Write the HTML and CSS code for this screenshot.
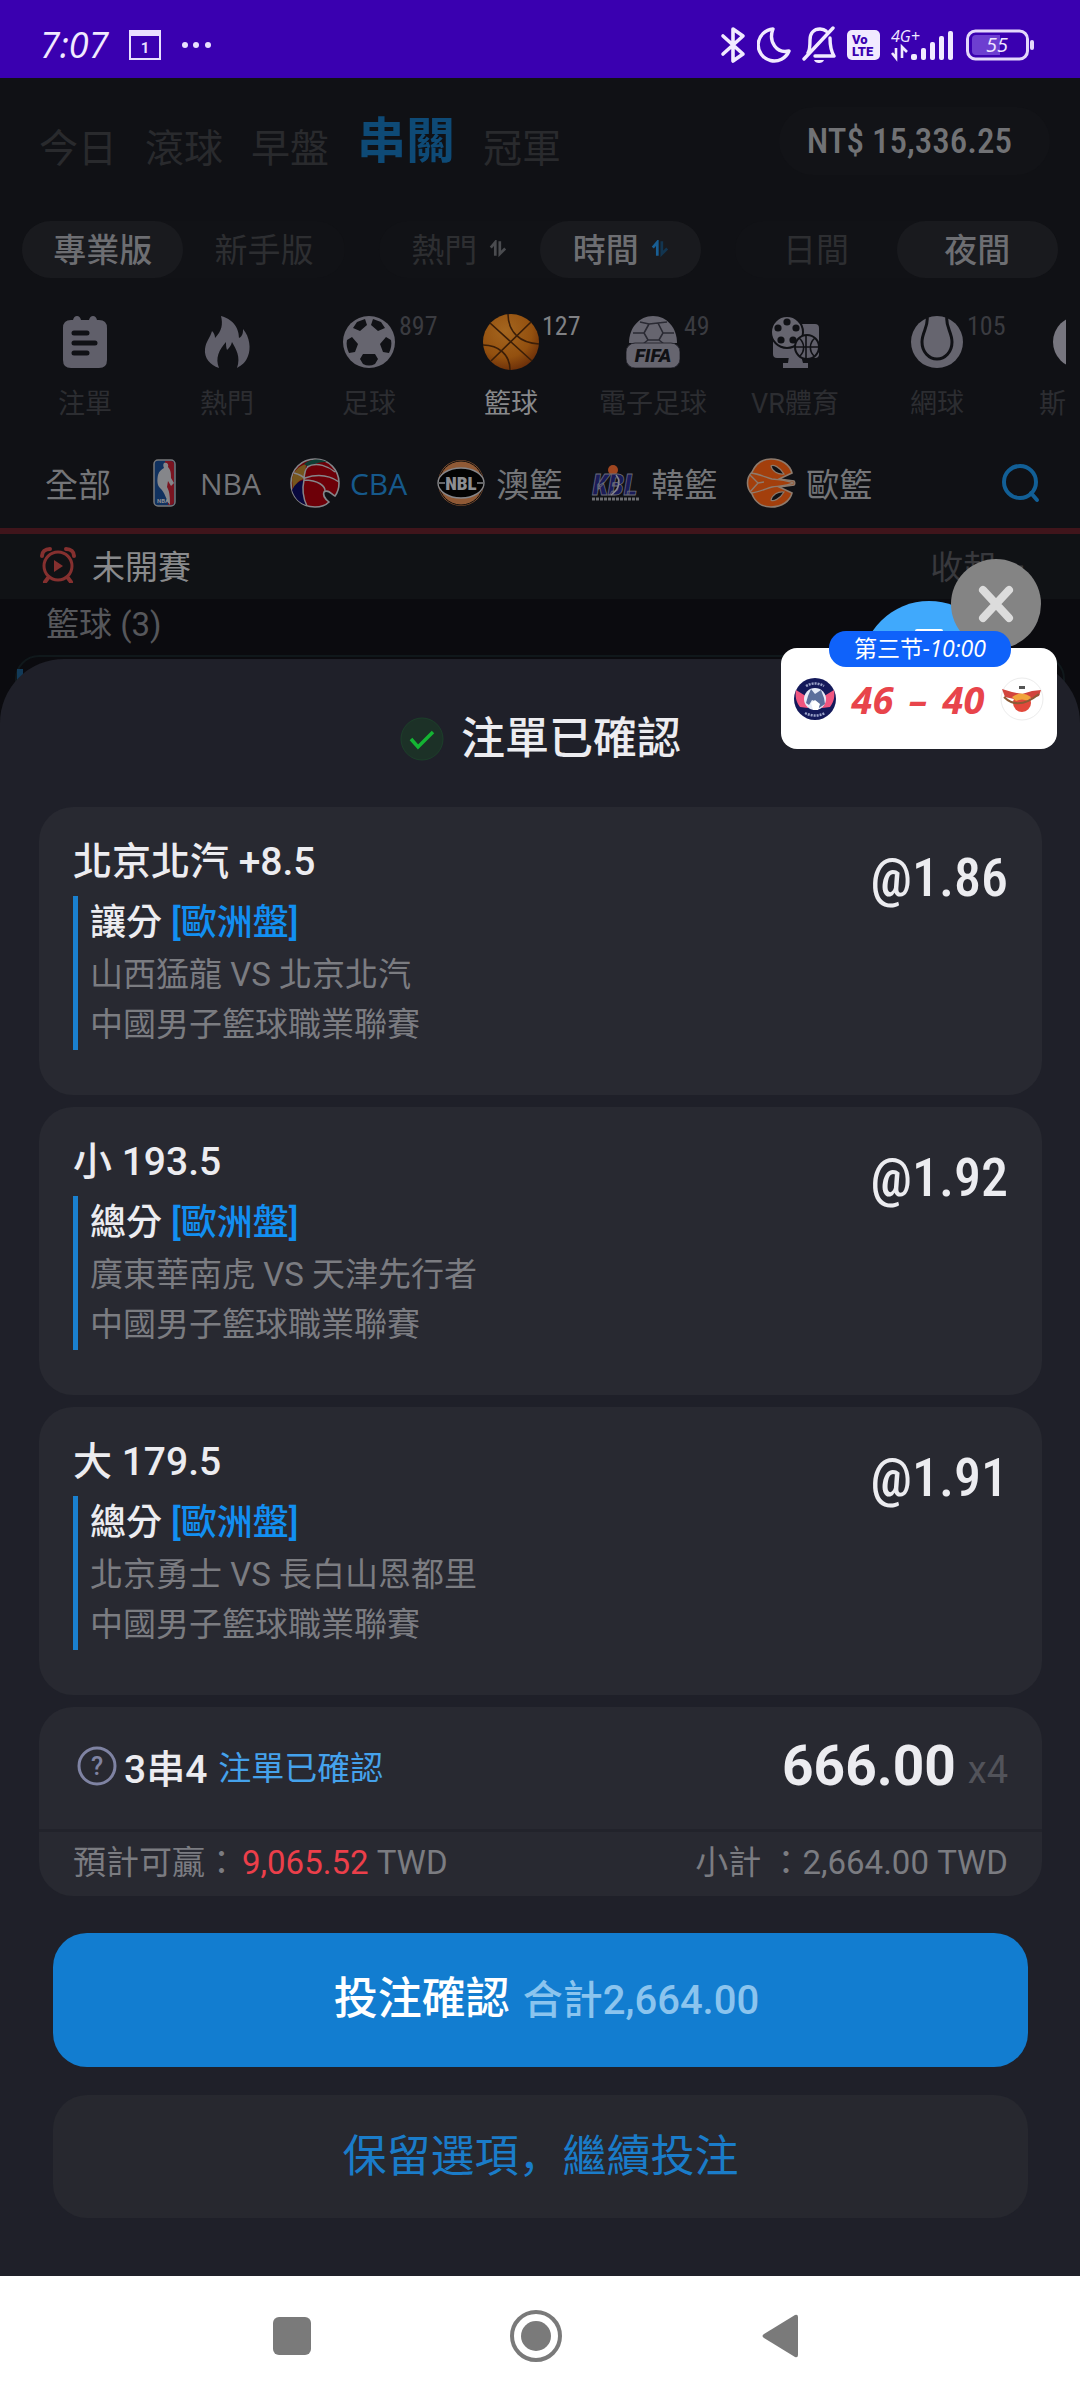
FILE: index.html
```html
<!DOCTYPE html>
<html lang="zh-Hant">
<head>
<meta charset="utf-8">
<meta name="viewport" content="width=device-width, initial-scale=1">
<title>注單已確認</title>
<link rel="stylesheet" href="styles.css">
</head>
<body>
<div class="screen">
  <div class="status">
    <div class="status-left">
      <span class="clock">7:07</span>
      <svg width="32" height="30" viewBox="0 0 32 30"><rect x="1" y="1" width="30" height="28" fill="none" stroke="#e9dfff" stroke-width="2"/><path d="M0 0h32v6H0z" fill="#e9dfff"/><text x="16" y="23" text-anchor="middle" font-family="Roboto" font-weight="700" font-size="15" fill="#e9dfff">1</text></svg>
      <svg width="30" height="8" viewBox="0 0 30 8" fill="#e9dfff"><circle cx="4" cy="4" r="3"/><circle cx="15" cy="4" r="3"/><circle cx="27" cy="4" r="3"/></svg>
    </div>
    <div class="status-right">
      <svg width="26" height="38" viewBox="0 0 26 38" fill="none" stroke="#f1eaff" stroke-width="3.6" stroke-linejoin="round" stroke-linecap="round"><path d="M3 10l20 18-10 7V3l10 7L3 28"/></svg>
      <svg width="34" height="36" viewBox="0 0 34 36" fill="none" stroke="#f1eaff" stroke-width="3.4" stroke-linejoin="round"><path d="M16 2A16 16 0 1 0 32 24C20 27 11 15 16 2z"/></svg>
      <svg width="34" height="38" viewBox="0 0 34 38" fill="none" stroke="#f1eaff" stroke-width="3.4" stroke-linejoin="round" stroke-linecap="round"><path d="M6 27C8 24 8 21 8 14c0-7 4-11 10-11 3 0 5 1 6 2M28 12c0 9 1 13 4 18H13M31 2L2 33"/><path d="M12 34h10c-1 4-9 4-10 0z" fill="#f1eaff" stroke="none"/></svg>
      <svg width="33" height="30" viewBox="0 0 33 30"><rect width="33" height="30" rx="5" fill="#f1eaff"/><g font-family="Roboto" font-weight="900" fill="#3a00b0"><text x="5" y="14" font-size="13">Vo</text><text x="5" y="26" font-size="13">LTE</text></g></svg>
      <svg width="64" height="42" viewBox="0 0 64 42" fill="#f1eaff"><text x="0" y="18" font-family="Open Sans" font-style="italic" font-size="16">4G+</text><path d="M5 24v10l-4-5m10 5V23l5 5" fill="none" stroke="#f1eaff" stroke-width="2.6"/><rect x="20" y="30" width="6" height="6" rx="2"/><rect x="30" y="24" width="5" height="12" rx="2"/><rect x="39" y="18" width="5" height="18" rx="2"/><rect x="48" y="12" width="5" height="24" rx="2"/><rect x="57" y="7" width="5" height="29" rx="2"/></svg>
      <svg width="68" height="32" viewBox="0 0 68 32"><rect x="1.5" y="2" width="60" height="28" rx="8" fill="none" stroke="#e4d8fb" stroke-width="3"/><path d="M10 6h24v20H10q-4 0-4-4V10q0-4 4-4z" fill="#6d3fd0"/><rect x="64" y="11" width="4" height="10" rx="2" fill="#e4d8fb"/><text x="31" y="23" text-anchor="middle" font-family="Open Sans" font-style="italic" font-size="20" fill="#efe6ff">55</text></svg>
    </div>
  </div>

  <header class="top">
    <nav class="tabs">
      <a href="#">今日</a><a href="#">滾球</a><a href="#">早盤</a><a href="#" class="on">串關</a><a href="#">冠軍</a>
    </nav>
    <button class="balance">NT$ 15,336.25</button>
  </header>

  <div class="toggles">
    <div class="group"><button class="on">專業版</button><button>新手版</button></div>
    <div class="group"><button>熱門 <svg width="18" height="17" viewBox="0 0 20 18" fill="none" stroke="#4a4b4f" stroke-width="3"><path d="M2 8l5-6v15M12 1v14l6-6"/></svg></button><button class="on">時間 <svg width="18" height="17" viewBox="0 0 20 18" fill="none" stroke="#185e94" stroke-width="3"><path d="M2 8l5-6v15"/><path d="M12 1v14l6-6" stroke="#123550"/></svg></button></div>
    <div class="group"><button>日間</button><button class="on">夜間</button></div>
  </div>

  <nav class="sports">
    <a href="#"><span class="ico"><svg width="52" height="52" viewBox="0 0 52 52"><path d="M4 12q0-8 8-8h2q1-4 4-4t4 4h8q1-4 4-4t4 4h2q8 0 8 8v32q0 8-8 8H12q-8 0-8-8z" fill="#605f6a"/><path d="M15 17h13M15 27h21M15 37h13" stroke="#101115" stroke-width="5" stroke-linecap="round"/></svg></span>注單</a>
    <a href="#"><span class="ico"><svg width="52" height="52" viewBox="0 0 52 52"><path d="M20 0C34 4 38 14 38 22c4-2 4-6 4-9 7 8 8 20 5 27-2 6-6 9-11 12 4-11-1-19-5-26-1 4-3 6-5 8-1-3-1-5-1-8-7 8-11 16-7 26C9 49 3 42 4 33c1-8 5-11 7-18 2 2 3 4 3 7 7-7 8-14 6-22z" fill="#605f6a"/></svg></span>熱門</a>
    <a href="#"><span class="ico"><svg width="52" height="52" viewBox="0 0 52 52"><circle cx="26" cy="26" r="26" fill="#66656f"/><g fill="#101115"><path d="M14 6l8-3 2 6-7 6-7-3zM38 6l-8-3-2 6 7 6 7-3zM4 24l5-3 6 7-3 8-6 1c-2-4-3-9-2-13zM48 24l-5-3-6 7 3 8 6 1c2-4 3-9 2-13zM20 38h12l3 5-3 5c-4 2-8 2-12 0l-3-5z"/></g></svg><em>897</em></span>足球</a>
    <a href="#" class="on"><span class="ico"><svg class="big" width="58" height="58" viewBox="0 0 58 58"><defs><radialGradient id="ball" cx=".4" cy=".3" r=".8"><stop offset="0" stop-color="#a5661f"/><stop offset=".6" stop-color="#93500f"/><stop offset="1" stop-color="#5f2508"/></radialGradient></defs><circle cx="29" cy="29" r="28" fill="url(#ball)"/><path d="M8 10l42 38M49 9L9 48M26 1c0 18 12 29 31 30M1 32c16 0 27 10 27 25" fill="none" stroke="#3b1e08" stroke-width="1.6"/></svg><em>127</em></span>籃球</a>
    <a href="#"><span class="ico"><svg width="54" height="52" viewBox="0 0 54 52"><path d="M3 27C3 12 13 0 27 0s24 12 24 27z" fill="#66656f"/><path d="M14 6l9 2 9-1 9-1M23 8l-5 9 4 7h11l4-7-5-10M18 17H7M37 17h11M22 24l-5 4M33 24l5 4" fill="none" stroke="#2a2a33" stroke-width="1.6"/><rect x="0" y="27" width="54" height="25" rx="9" fill="#66656f" stroke="#2a2a33" stroke-width="1"/><text x="27" y="46" text-anchor="middle" font-family="Roboto" font-style="italic" font-weight="900" font-size="19" fill="#101115">FIFA</text></svg><em>49</em></span>電子足球</a>
    <a href="#"><span class="ico"><svg width="52" height="52" viewBox="0 0 52 52"><path d="M4 12q0-4 4-4h38q4 0 4 4v26q0 4-4 4H8q-4 0-4-4zM20 40h12l2 7h5v5H14v-5h5z" fill="#605f6a"/><circle cx="18" cy="16" r="16" fill="#66656f" stroke="#101115" stroke-width="2"/><g fill="#101115"><circle cx="18" cy="6" r="3.6"/><circle cx="9" cy="12" r="3.6"/><circle cx="27" cy="12" r="3.6"/><circle cx="12" cy="24" r="3.6"/><circle cx="24" cy="24" r="3.6"/></g><circle cx="38" cy="31" r="12" fill="#605f6a" stroke="#101115" stroke-width="2"/><path d="M27 31h22M37 19v24M30 22c6 5 6 13 1 18M46 22c-6 5-6 13-1 18" fill="none" stroke="#101115" stroke-width="1.6"/></svg></span>VR體育</a>
    <a href="#"><span class="ico"><svg width="52" height="52" viewBox="0 0 52 52"><circle cx="26" cy="26" r="26" fill="#66656f"/><path d="M16 0c2 10-5 16-5 26 0 10 7 17 15 17s15-7 15-17c0-10-7-16-5-26" fill="none" stroke="#101115" stroke-width="3"/></svg><em>105</em></span>網球</a>
    <a href="#" class="peek"><span class="ico"><svg width="52" height="52" viewBox="0 0 52 52"><circle cx="26" cy="26" r="26" fill="#77767f"/></svg></span><span>斯</span></a>
  </nav>

  <div class="leagues">
    <a href="#">全部</a>
    <a href="#"><svg width="50" height="50" viewBox="0 0 50 50"><rect x="14" y="2" width="21" height="46" rx="4" fill="#10315f" stroke="#77787a" stroke-width="1.5"/><path d="M25 3h6q3 0 3 3v38q0 3-3 3h-3z" fill="#7a1420"/><path d="M24 5c3-1 5 1 4 4 3 3 3 7 3 11l3 5-3 3-3-5-1 6c3 5 3 12 3 18-4-5-5-13-10-17-3-3-3-8-2-13 1-4 4-6 6-7-1-2-1-4 0-5z" fill="#85868a"/><text x="23" y="45" text-anchor="middle" font-family="Roboto" font-weight="700" font-size="6" fill="#8d8e91">NBA</text></svg><span class="abbr">NBA</span></a>
    <a href="#" class="on"><svg width="50" height="50" viewBox="0 0 50 50"><path d="M25 1C12 1 1 11 1 25s10 24 24 24c6 0 11-2 14-5-5-4-6-8-5-10 4-3 7 2 11 4 3-4 4-9 4-13C49 12 39 1 25 1z" fill="#6d0008" stroke="#85868a" stroke-width="1.6"/><path d="M2 21C4 12 9 8 16 6l-1 15C9 21 6 26 3 32z" fill="#75551c"/><path d="M2 32c3-6 7-9 12-10-2 9-1 18 2 25C9 45 4 39 2 32z" fill="#08083d"/><path d="M14 6c8-6 17-5 23-2-7 0-12 1-18 5z" fill="#0d3d33"/><path d="M14 22c0-8 2-12 5-14M14 22c-2 9-1 18 3 26M14 22c14 0 22 6 21 12M15 20c12-4 24-3 34 4M17 9c10-6 22 0 28 5M4 15c4 1 8 2 11 6" fill="none" stroke="#85868a" stroke-width="1.5"/></svg><span class="abbr">CBA</span></a>
    <a href="#"><svg width="50" height="50" viewBox="0 0 50 50"><circle cx="25" cy="25" r="23" fill="#8f5935"/><circle cx="25" cy="25" r="22" fill="none" stroke="#0a0a0a" stroke-width="1"/><ellipse cx="25" cy="25" rx="23" ry="15" fill="#030303" stroke="#85868a" stroke-width="1.4"/><path d="M3 25h6M41 25h6" stroke="#85868a" stroke-width="1.5"/><text x="25" y="32" text-anchor="middle" font-family="Roboto Condensed" font-weight="900" font-size="19" fill="#8d8e91">NBL</text></svg>澳籃</a>
    <a href="#"><svg width="50" height="50" viewBox="0 0 50 50"><circle cx="22" cy="12" r="5" fill="#a04620"/><text x="24" y="37" text-anchor="middle" font-family="Roboto Condensed" font-style="italic" font-weight="900" font-size="29" fill="#1a1b58" stroke="#6a6b78" stroke-width=".8">KBL</text><path d="M25 17c6 7 2 15-5 20" fill="none" stroke="#85868a" stroke-width="1.5"/><path d="M1 41h48" stroke="#6b6c70" stroke-width="3" stroke-dasharray="3 1"/></svg>韓籃</a>
    <a href="#"><svg width="50" height="50" viewBox="0 0 50 50"><path d="M6 14C10 5 17 1 25 1c11 0 19 6 21 14l-13 6 15 2c1 1 1 3 0 4l-15 2 13 6C44 43 36 49 25 49 16 49 9 44 6 36 0 30 0 20 6 14z" fill="#a33f0c" stroke="#8d7a6c" stroke-width="1.6"/><path d="M5 15c9 1 16 5 21 6 7 1 15 1 21 4-6 3-14 3-21 4-5 1-12 5-21 6M4 17l8 8-8 9M12 25l6-1" fill="none" stroke="#8d7a6c" stroke-width="1.4"/><path d="M25 8c2-2 9 1 13 8-6 1-12-3-13-8zM25 42c2 2 9-1 13-8-6-1-12 3-13 8z" fill="#101115" stroke="#8d7a6c" stroke-width="1.2"/></svg>歐籃</a>
    <button class="search" aria-label="搜尋"><svg width="38" height="40" viewBox="0 0 38 40" fill="none" stroke="#125f96" stroke-width="4" stroke-linecap="round"><circle cx="18" cy="19" r="16"/><path d="M29 30l6 7"/></svg></button>
  </div>

  <div class="section-head">
    <svg width="36" height="36" viewBox="0 0 36 36" fill="none" stroke="#85302f" stroke-width="3"><circle cx="18" cy="19" r="14"/><path d="M14 13l9 6-9 6z" fill="#85302f" stroke="none"/><path d="M2 9c0-4 3-7 8-7M34 9c0-4-3-7-8-7M8 31l-3 4M28 31l3 4" stroke-linecap="round" stroke-width="4"/></svg>
    <h2>未開賽</h2>
    <button class="fold">收起 <span>–</span></button>
  </div>
  <h3 class="group-title">籃球 (3)</h3>
  <div class="match-card"></div>

  <main class="sheet">
    <h1><svg width="44" height="44" viewBox="0 0 44 44"><circle cx="22" cy="22" r="21" fill="#1c3127" stroke="#1c3f2a"/><path d="M11 22l7 8 15-15" fill="none" stroke="#14b433" stroke-width="3.5"/></svg>注單已確認</h1>

    <section class="bets">
      <article class="bet">
        <div><h4>北京北汽 +8.5</h4>
          <div class="detail"><p class="market">讓分 <b>[歐洲盤]</b></p><p>山西猛龍 VS 北京北汽</p><p>中國男子籃球職業聯賽</p></div></div>
        <strong class="odds">@1.86</strong>
      </article>
      <article class="bet">
        <div><h4>小 193.5</h4>
          <div class="detail"><p class="market">總分 <b>[歐洲盤]</b></p><p>廣東華南虎 VS 天津先行者</p><p>中國男子籃球職業聯賽</p></div></div>
        <strong class="odds">@1.92</strong>
      </article>
      <article class="bet">
        <div><h4>大 179.5</h4>
          <div class="detail"><p class="market">總分 <b>[歐洲盤]</b></p><p>北京勇士 VS 長白山恩都里</p><p>中國男子籃球職業聯賽</p></div></div>
        <strong class="odds">@1.91</strong>
      </article>
      <article class="summary">
        <div class="stake">
          <svg width="40" height="40" viewBox="0 0 40 40"><circle cx="20" cy="20" r="18" fill="none" stroke="#7f83a3" stroke-width="3"/><text x="20" y="29" text-anchor="middle" font-family="Roboto" font-weight="500" font-size="25" fill="#7f83a3">?</text></svg>
          <strong>3串4</strong><span class="state">注單已確認</span>
          <span class="amount">666.00</span><span class="times">x4</span>
        </div>
        <div class="totals"><span>預計可贏：<b>9,065.52</b> TWD</span><span>小計 ：2,664.00 TWD</span></div>
      </article>
    </section>

    <div class="actions">
      <button class="primary">投注確認 <small>合計2,664.00</small></button>
      <button class="secondary" lang="zh-Hans">保留選項，繼續投注</button>
    </div>
  </main>

  <nav class="sysnav">
    <button aria-label="最近"><svg width="38" height="38" viewBox="0 0 38 38"><rect width="38" height="38" rx="6" fill="#7a7a7a"/></svg></button>
    <button aria-label="主畫面"><svg width="54" height="54" viewBox="0 0 54 54"><circle cx="27" cy="27" r="24" fill="none" stroke="#7a7a7a" stroke-width="4"/><circle cx="27" cy="27" r="15" fill="#7a7a7a"/></svg></button>
    <button aria-label="返回"><svg width="36" height="44" viewBox="0 0 36 44"><path d="M2 20L33 1q3-1 3 2v38q0 3-3 2L2 24q-3-2 0-4z" fill="#7a7a7a"/></svg></button>
  </nav>

  <aside class="floater">
    <span class="bubble"></span>
    <button class="close" aria-label="關閉"><svg width="36" height="38" viewBox="0 0 36 38"><path d="M5 5l26 28M31 5L5 33" stroke="#dcdcdc" stroke-width="8" stroke-linecap="round"/></svg></button>
    <div class="score">
      <svg width="42" height="42" viewBox="0 0 42 42"><circle cx="21" cy="21" r="21" fill="#14195a"/><path d="M2 12l13 8-1 10-8-1C2 24 1 18 2 12zM40 12l-13 8 1 10 8-1c4-5 5-11 4-17z" fill="#f0567f"/><circle cx="21" cy="21" r="11" fill="#e6ecf8"/><path d="M12 25l2-7 3-7 4 5 6-4 3 8 1 6-6 4-2-6-5-2-3 5z" fill="#5b6f9c"/><path d="M17 25l4-3 5 4-2 6h-5z" fill="#fff"/><path d="M12 8q9-5 18 0M11 35q10 5 20 0" fill="none" stroke="#9aa2c8" stroke-width="2.5" stroke-dasharray="2 1"/></svg>
      <span>46</span><span>–</span><span>40</span>
      <svg width="44" height="44" viewBox="0 0 44 44"><circle cx="22" cy="22" r="21" fill="#fff" stroke="#ececec"/><circle cx="22" cy="26" r="9" fill="#e2483b"/><path d="M2 12l10 3 10 2 10-3 9-1-2 6-10 3H14L5 20z" fill="#d2443c"/><path d="M12 20q10-7 19 0l-3 4q-6-3-12 0z" fill="#f1a33b"/><path d="M4 20q14 14 35-3" fill="none" stroke="#8b5a35" stroke-width="2"/><path d="M19 9h6v3h-6z" fill="#555"/></svg>
    </div>
    <span class="period">第三节-<i>10:00</i></span>
  </aside>
</div>
</body>
</html>
```
FILE: styles.css
```css
* { box-sizing: border-box; }
body {
  margin: 0;
  background: #0b0b0f;
  color: #ececf0;
  font-family: Roboto, "Noto Sans CJK JP", sans-serif;
}
h1, h2, h3, h4, p { margin: 0; font-weight: 400; }
a { color: inherit; text-decoration: none; }
button { padding: 0; border: 0; background: none; color: inherit; font: inherit; cursor: pointer; }
svg { display: block; flex: none; }

.screen {
  position: relative;
  display: flex;
  flex-direction: column;
  min-height: 100vh;
  overflow: hidden;
}

/* phone status bar */
.status {
  display: flex;
  justify-content: space-between;
  height: 78px;
  padding: 12px 46px 0 40px;
  background: #3a00b0;
}
.status-left, .status-right { display: flex; align-items: center; }
.status-left { gap: 20px; }
.status-right { gap: 11px; }
.clock { font-family: "Open Sans", sans-serif; font-style: italic; font-size: 36px; line-height: 36px; color: #f1eaff; }

/* header */
.top {
  display: flex;
  justify-content: space-between;
  align-items: flex-start;
  padding: 29px 30px 0 39px;
}
.top, .toggles, .sports, .leagues { background: #101115; }
.tabs { display: flex; align-items: flex-end; gap: 28px; height: 70px; }
.tabs a { font-size: 39px; line-height: 56px; color: #292a2d; }
.tabs .on { font-size: 49px; line-height: 70px; font-weight: 700; color: #0e4a76; }
.balance {
  height: 68px;
  padding: 0 38px 0 28px;
  border-radius: 34px;
  background: #121317;
  font-family: "Roboto Condensed", sans-serif;
  font-size: 35px;
  font-weight: 500;
  color: #717275;
}

.toggles {
  display: grid;
  grid-template-columns: 1fr 1fr 1fr;
  gap: 34px;
  padding: 44px 22px 0;
}
.group { display: grid; grid-template-columns: 1fr 1fr; border-radius: 29px; background: #111216; }
.group button {
  display: flex;
  align-items: center;
  justify-content: center;
  gap: 12px;
  height: 57px;
  padding-bottom: 3px;
  border-radius: 29px;
  font-size: 33px;
  color: #2d2e31;
}
.group .on { background: #191a1e; color: #6d6e72; font-weight: 500; }

.sports { display: flex; padding: 38px 0 14px; border: solid #101115; border-width: 0 14px; overflow: hidden; }
.sports a {
  display: flex;
  flex: none;
  flex-direction: column;
  align-items: center;
  gap: 16px;
  width: 142px;
  font-size: 27px;
  line-height: 40px;
  white-space: nowrap;
  color: #2c2d31;
}
.sports .on { color: #88898b; }
.sports .peek { align-items: flex-start; width: 60px; padding-left: 31px; }
.peek .ico { margin-left: 14px; }
.ico { position: relative; display: flex; align-items: center; height: 52px; }
.ico .big { margin: -3px 0; }
.ico em {
  position: absolute;
  left: 100%;
  top: -4px;
  padding-left: 4px;
  font: 400 26px/28px "Roboto Condensed", sans-serif;
  color: #3a3b40;
}
.sports .on em { color: #808184; padding-left: 2px; }

.leagues {
  display: flex;
  align-items: center;
  gap: 29px;
  height: 90px;
  padding: 0 40px 0 45px;
  font-size: 33px;
  color: #747578;
}
.leagues a { display: flex; align-items: center; gap: 10px; white-space: nowrap; }
.leagues .on { color: #16598b; }
.abbr { font-family: "Open Sans", sans-serif; font-size: 30px; }
.search { margin-left: auto; }

.section-head {
  display: flex;
  align-items: center;
  gap: 16px;
  height: 71px;
  padding: 0 54px 4px 40px;
  border-top: 6px solid #40151b;
  background: #101215;
  font-size: 33px;
}
.section-head h2 { font-size: 33px; color: #8a8b8d; }
.fold { margin-left: auto; color: #38393d; }
.group-title { padding-left: 46px; font-size: 33px; line-height: 52px; color: #56575b; }
.match-card {
  height: 64px;
  margin: 4px 15px -60px;
  padding-top: 12px;
  border: 2px solid #10181b;
  border-radius: 24px;
}
.match-card::before { content: ""; display: block; width: 6px; height: 16px; background: #123a58; }

/* confirmation sheet */
.sheet {
  position: relative;
  flex: 1;
  padding: 50px 38px 0 39px;
  border-radius: 64px 64px 0 0;
  background: #1f2029;
}
.sheet h1 {
  display: flex;
  align-items: center;
  justify-content: center;
  gap: 17px;
  margin-bottom: 38px;
  font-size: 44px;
  line-height: 60px;
  font-weight: 500;
}
.bets { display: grid; gap: 12px; }
.bet, .summary { border-radius: 34px; background: #282931; }
.bet {
  display: flex;
  justify-content: space-between;
  align-items: flex-start;
  min-height: 288px;
  padding: 25px 34px;
}
.bet h4 { font-size: 39px; line-height: 60px; font-weight: 500; }
.detail {
  margin-top: 4px;
  padding-left: 12px;
  border-left: 5px solid #1a80cf;
  font-size: 33px;
  line-height: 50px;
  color: #7b7c81;
}
.detail .market { font-size: 36px; line-height: 54px; color: #ececf0; font-weight: 500; }
.market b { color: #128ff2; font-weight: 500; }
.odds { font: 500 54px/92px "Roboto Condensed", sans-serif; }

.stake {
  display: flex;
  align-items: center;
  height: 122px;
  padding: 0 34px 4px 38px;
}
.stake strong { margin-left: 7px; font-size: 39px; font-weight: 500; }
.state { margin-left: 11px; font-size: 33px; color: #45a2ec; }
.amount { margin-left: auto; font-size: 55px; font-weight: 700; line-height: 60px; }
.times { margin: 8px 0 0 12px; font-size: 38px; line-height: 42px; color: #52535a; }
.totals {
  display: flex;
  justify-content: space-between;
  padding: 0 34px 2px;
  border-top: 3px solid #22232b;
  font-size: 33px;
  line-height: 62px;
  color: #7b7c81;
}
.totals b { margin-left: 4px; font-weight: 400; color: #ec3f4a; }

.actions { display: grid; gap: 28px; padding: 37px 14px 58px; }
.actions button { border-radius: 34px; font-size: 44px; }
.actions .primary { height: 134px; padding: 0 0 10px 12px; background: #127dd0; color: #fff; font-weight: 500; }
.primary small { margin-left: 2px; font-size: 40px; color: #8bc4ee; }
.actions .secondary { height: 123px; padding-bottom: 8px; background: #27282f; color: #1a7cc9; }

.sysnav {
  display: flex;
  align-items: center;
  justify-content: center;
  gap: 164px;
  height: 125px;
  padding: 0 8px 6px 0;
  background: #fff;
}
.sysnav button { display: grid; place-items: center; width: 80px; height: 80px; }

/* floating score widget */
.floater { position: absolute; top: 559px; right: 23px; width: 276px; height: 190px; }
.bubble { position: absolute; left: 80px; top: 42px; width: 136px; height: 136px; border-radius: 50%; background: #40a9fc; }
.bubble::after { content: ""; position: absolute; left: 54px; top: 28px; width: 28px; height: 4px; border-radius: 2px; background: #fff; }
.close { position: absolute; right: 16px; top: 0; display: grid; place-items: center; width: 90px; height: 90px; border-radius: 50%; background: #848484; }
.score {
  position: absolute;
  inset: 89px 0 0;
  display: flex;
  align-items: center;
  justify-content: space-between;
  padding: 0 13px;
  border-radius: 16px;
  background: #fff;
  font: italic 700 38px/40px "Open Sans", sans-serif;
  color: #e8444b;
}
.period {
  position: absolute;
  left: 48px;
  top: 72px;
  width: 182px;
  border-radius: 17px;
  background: #0f62fa;
  font-size: 23px;
  line-height: 35px;
  text-align: center;
  color: #fff;
}
.period i { font-family: "Open Sans", sans-serif; }
```
